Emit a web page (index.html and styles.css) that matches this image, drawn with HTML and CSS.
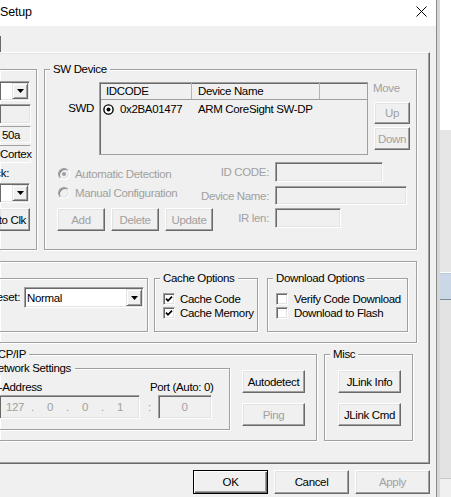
FILE: index.html
```html
<!DOCTYPE html>
<html lang="en">
<head>
<meta charset="utf-8">
<title>Setup</title>
<link rel="stylesheet" href="styles.css">
</head>
<body>
<div class="screen">
  <div class="dialog">
    <div class="titlebar">
      <span class="title">Setup</span>
      <svg class="close" width="11" height="11" viewBox="0 0 11 11"><path d="M0.5 0.5L10.5 10.5M10.5 0.5L0.5 10.5" stroke="#000" stroke-width="1" fill="none"/></svg>
    </div>
    <div class="client">
      <div class="tabstrip"><div class="tab"></div></div>
      <div class="page">
        <div class="row1">
          <div class="group cut adapter">
            <div class="combo cut w30 c1"><span class="combo-field"></span><span class="combo-btn"><svg width="7" height="4" viewBox="0 0 7 4"><polygon points="0,0 7,0 3.5,4" fill="#000"/></svg></span></div>
            <div class="field dis cut f1"></div>
            <div class="field stat cut f2"><span>50a</span></div>
            <div class="field stat cut f3"><span>Cortex</span></div>
            <div class="rlabel lbl-clk"><span>Max Clock:</span></div>
            <div class="combo cut w30 c2"><span class="combo-field"></span><span class="combo-btn"><svg width="7" height="4" viewBox="0 0 7 4"><polygon points="0,0 7,0 3.5,4" fill="#000"/></svg></span></div>
            <button class="btn cut autoclk"><span>Auto Clk</span></button>
          </div>
          <div class="group swdev">
            <div class="legend">SW Device</div>
            <div class="sw-top">
              <div class="swd-label">SWD</div>
              <div class="list">
                <div class="list-head">
                  <div class="col c-id">IDCODE</div>
                  <div class="col c-name">Device Name</div>
                  <div class="col c-rest"></div>
                </div>
                <div class="list-row">
                  <div class="cell-id">
                    <svg class="sel" width="11" height="11" viewBox="0 0 11 11"><circle cx="5.5" cy="5.5" r="4.6" fill="#fff" stroke="#000" stroke-width="1.4"/><circle cx="5.5" cy="5.5" r="2" fill="#000"/></svg>
                    <span>0x2BA01477</span>
                  </div>
                  <div class="cell-name">ARM CoreSight SW-DP</div>
                </div>
              </div>
              <div class="move-col">
                <div class="move-lbl dim">Move</div>
                <button class="btn dim up">Up</button>
                <button class="btn dim down">Down</button>
              </div>
            </div>
            <div class="sw-bottom">
              <div class="opts">
                <div class="radio-row dim r1"><span class="radio on"></span><span class="rtext">Automatic Detection</span></div>
                <div class="radio-row dim r2"><span class="radio"></span><span class="rtext">Manual Configuration</span></div>
                <div class="btn-row">
                  <button class="btn dim b48">Add</button>
                  <button class="btn dim b48">Delete</button>
                  <button class="btn dim b48">Update</button>
                </div>
              </div>
              <div class="form">
                <div class="frow fr1"><span class="flabel dim">ID CODE:</span><span class="field dis in-id"></span></div>
                <div class="frow fr2"><span class="flabel dim">Device Name:</span><span class="field dis in-name"></span></div>
                <div class="frow fr3"><span class="flabel dim">IR len:</span><span class="field dis in-ir"></span></div>
              </div>
            </div>
          </div>
        </div>

        <div class="group cut conn">
          <div class="group cut resetbox">
            <div class="reset-row">
              <div class="rlabel lbl-reset"><span>Reset:</span></div>
              <div class="combo c-reset"><span class="combo-field"><span class="combo-val">Normal</span></span><span class="combo-btn"><svg width="7" height="4" viewBox="0 0 7 4"><polygon points="0,0 7,0 3.5,4" fill="#000"/></svg></span></div>
            </div>
          </div>
          <div class="group cache">
            <div class="legend">Cache Options</div>
            <div class="checks">
              <div class="cb-row"><span class="cb on"><svg width="8" height="8" viewBox="0 0 8 8"><path d="M1 3.6L3 5.8L7 1.6" stroke="#000" stroke-width="1.7" fill="none"/></svg></span><span class="cbt">Cache Code</span></div>
              <div class="cb-row"><span class="cb on"><svg width="8" height="8" viewBox="0 0 8 8"><path d="M1 3.6L3 5.8L7 1.6" stroke="#000" stroke-width="1.7" fill="none"/></svg></span><span class="cbt">Cache Memory</span></div>
            </div>
          </div>
          <div class="group dl">
            <div class="legend">Download Options</div>
            <div class="checks">
              <div class="cb-row"><span class="cb"></span><span class="cbt">Verify Code Download</span></div>
              <div class="cb-row"><span class="cb"></span><span class="cbt">Download to Flash</span></div>
            </div>
          </div>
        </div>

        <div class="row3">
          <div class="group cut tcp">
            <div class="legend-cut lc-tcp"><span>TCP/IP</span></div>
            <div class="tcp-body">
              <div class="group cut nw">
                <div class="legend-cut lc-nw"><span>Network Settings</span></div>
                <div class="nw-labels">
                  <div class="rlabel lbl-ip"><span>IP-Address</span></div>
                  <span class="port-lbl">Port (Auto: 0)</span>
                </div>
                <div class="nw-inputs">
                  <div class="field dis cut ip">
                    <span class="oct">127</span><span class="dot">.</span><span class="oct">0</span><span class="dot">.</span><span class="oct">0</span><span class="dot">.</span><span class="oct">1</span>
                  </div>
                  <span class="colon dim">:</span>
                  <div class="field dis port"><span>0</span></div>
                </div>
              </div>
              <div class="btn-col tcp-btns">
                <button class="btn b63">Autodetect</button>
                <button class="btn dim b63 second">Ping</button>
              </div>
            </div>
          </div>
          <div class="group misc">
            <div class="legend">Misc</div>
            <div class="btn-col misc-btns">
              <button class="btn b63">JLink Info</button>
              <button class="btn b63 second">JLink Cmd</button>
            </div>
          </div>
        </div>
      </div>
      <div class="footer">
        <button class="btn def fb">OK</button>
        <button class="btn fb">Cancel</button>
        <button class="btn dim fb">Apply</button>
      </div>
    </div>
  </div>
  <div class="behind">
    <div class="bh-top"></div>
    <div class="bh-mid"></div>
    <div class="bh-band"></div>
    <div class="bh-low"></div>
  </div>
</div>
</body>
</html>
```

FILE: styles.css
```css
* { box-sizing: border-box; }
html, body { margin: 0; padding: 0; }
body {
  width: 451px; height: 497px; overflow: hidden;
  background: #f0f0f0;
  font-family: "Liberation Sans", Arial, sans-serif;
  font-size: 11.5px; line-height: 14px; letter-spacing: -0.35px; color: #000;
}
button {
  font: inherit; color: inherit; letter-spacing: inherit; margin: 0; padding: 0;
  background: #f0f0f0; display: flex; align-items: center; justify-content: center;
  white-space: nowrap;
}
.screen { display: flex; height: 497px; }
.dialog {
  width: 437px; flex: none; height: 497px;
  border-right: 1px solid #8a8a8a;
  background: #f0f0f0;
  display: flex; flex-direction: column;
}
.titlebar {
  height: 26px; flex: none; background: #fff;
  display: flex; align-items: flex-start; justify-content: space-between;
}
.title { margin-top: 5px; font-size: 12.5px; letter-spacing: -0.2px; }
.close { margin: 6px 9px 0 0; }
.client { flex: 1; display: flex; flex-direction: column; }
.tabstrip { height: 26px; flex: none; }
.tab { width: 1px; height: 16px; margin-top: 10px; border-right: 1px solid #696969; }
.page {
  width: 430px; height: 412px; flex: none;
  border-top: 1px solid #fff; border-right: 1px solid #696969; border-bottom: 1px solid #696969;
  box-shadow: inset -1px -1px 0 #a0a0a0, inset 0 1px 0 #e3e3e3;
  display: flex; flex-direction: column;
}
.dim { color: #a0a0a0; }

/* group boxes */
.group {
  position: relative; flex: none;
  border: 1px solid #a0a0a0;
  box-shadow: inset 1px 1px 0 #fff, 1px 1px 0 #fff;
}
.group.cut { border-left: none; }
.legend {
  position: absolute; top: -8px; left: 5px; padding: 0 3px;
  background: #f0f0f0; white-space: nowrap;
}
.legend-cut {
  position: absolute; top: -8px; left: 0;
  display: flex; justify-content: flex-end;
  background: #f0f0f0; white-space: nowrap;
}
.lc-tcp { width: 29px; padding-right: 3px; }
.lc-nw { width: 75px; padding-right: 4px; }
.rlabel { display: flex; justify-content: flex-end; white-space: nowrap; flex: none; }

/* sunken fields */
.field {
  display: flex; align-items: center; flex: none;
  border: 1px solid; border-color: #a0a0a0 #fff #fff #a0a0a0;
  box-shadow: inset 1px 1px 0 #696969, inset -1px -1px 0 #e3e3e3;
  background: #fff; white-space: nowrap;
}
.field.cut { border-left: none; }
.field.dis { background: #f0f0f0; }
.field.stat { background: #f0f0f0; box-shadow: none; }

/* combo */
.combo {
  display: flex; flex: none; padding: 1px;
  border: 1px solid; border-color: #a0a0a0 #fff #fff #a0a0a0;
  box-shadow: inset 1px 1px 0 #696969, inset -1px -1px 0 #e3e3e3;
  background: #fff;
}
.combo.cut { border-left: none; padding-left: 0; }
.combo-field { flex: 1; display: flex; align-items: center; }
.combo-btn {
  width: 16px; flex: none; display: flex; align-items: center; justify-content: center;
  background: #f0f0f0;
  border: 1px solid; border-color: #e3e3e3 #696969 #696969 #e3e3e3;
  box-shadow: inset 1px 1px 0 #fff, inset -1px -1px 0 #a0a0a0;
}

/* buttons */
.btn {
  flex: none;
  border: 1px solid; border-color: #fff #696969 #696969 #fff;
  box-shadow: inset -1px -1px 0 #a0a0a0, inset 1px 1px 0 #e3e3e3;
}
.btn.def {
  border-color: #000;
  box-shadow: inset 1px 1px 0 #fff, inset -1px -1px 0 #696969, inset -2px -2px 0 #a0a0a0;
}
.btn.cut { border-left: none; }

/* row 1 */
.row1 { display: flex; margin-top: 16px; height: 181px; flex: none; }
.adapter { width: 37px; height: 181px; display: flex; flex-direction: column; align-items: flex-start; }
.w30 { width: 30px; height: 20px; }
.c1 { margin-top: 11px; }
.f1 { width: 31px; height: 20px; margin-top: 3px; }
.f2 { width: 31px; height: 17px; margin-top: 2px; padding-left: 2px; }
.f3 { width: 31px; height: 18px; margin-top: 2px; }
.lbl-clk { width: 9px; height: 14px; margin-top: 3px; }
.c2 { margin-top: 3px; }
.autoclk { width: 30px; height: 23px; margin-top: 5px; justify-content: flex-end; padding-right: 3px; }

.swdev { width: 373px; height: 181px; margin-left: 7px; }
.sw-top { display: flex; margin-top: 12px; }
.swd-label { width: 49px; text-align: right; margin-top: 19px; flex: none; }
.list {
  width: 269px; height: 73px; margin-left: 5px; flex: none;
  border: 1px solid #a0a0a0;
  box-shadow: inset 1px 1px 0 #696969;
}
.list-head { display: flex; height: 17px; border-bottom: 1px solid #a0a0a0; margin-left: 1px; }
.col { height: 16px; line-height: 16px; padding-left: 6px; border-right: 1px solid #b4b4b4; flex: none; }
.c-id { width: 91px; padding-left: 5px; }
.c-name { width: 128px; }
.c-rest { width: 47px; border-right: none; }
.list-row { display: flex; margin-top: 2px; height: 14px; }
.cell-id { width: 98px; display: flex; align-items: center; flex: none; }
.sel { margin-left: 3px; margin-right: 6px; }
.cell-name { flex: none; }
.move-col { display: flex; flex-direction: column; align-items: flex-start; margin-left: 5px; width: 37px; flex: none; }
.move-lbl { height: 14px; margin-top: -1px; }
.up { width: 36px; height: 22px; margin-left: 1px; margin-top: 7px; }
.down { width: 36px; height: 23px; margin-left: 1px; margin-top: 3px; }

.sw-bottom { display: flex; margin-top: 7px; }
.opts { width: 113px; margin-left: 12px; display: flex; flex-direction: column; flex: none; }
.radio-row { display: flex; align-items: center; height: 14px; white-space: nowrap; }
.r1 { margin-top: 5px; }
.r2 { margin-top: 5px; }
.radio {
  width: 12px; height: 12px; margin-left: 1px; flex: none; position: relative;
  border-radius: 50%;
  border: 1px solid; border-color: #a0a0a0 #fff #fff #a0a0a0;
  box-shadow: inset 1px 1px 0 #808080, inset -1px -1px 0 #e3e3e3;
  background: #f0f0f0;
}
.radio.on::after {
  content: ""; position: absolute; left: 3px; top: 3px; width: 4px; height: 4px;
  border-radius: 50%; background: #a0a0a0;
}
.rtext { margin-left: 5px; }
.btn-row { display: flex; gap: 6px; margin-top: 8px; }
.b48 { width: 48px; height: 23px; }
.form { display: flex; flex-direction: column; flex: none; }
.frow { display: flex; align-items: center; }
.fr1 { height: 20px; }
.fr2 { height: 19px; margin-top: 4px; }
.fr3 { height: 20px; margin-top: 3px; }
.flabel { width: 99px; text-align: right; margin-right: 6px; white-space: nowrap; }
.in-id { width: 108px; height: 20px; }
.in-name { width: 132px; height: 19px; }
.in-ir { width: 66px; height: 20px; }

/* row 2 */
.conn { width: 417px; height: 82px; margin-top: 11px; display: flex; align-items: flex-start; padding-top: 16px; }
.resetbox { width: 148px; height: 54px; }
.reset-row { display: flex; margin-top: 8px; }
.lbl-reset { width: 20px; line-height: 21px; }
.c-reset { width: 120px; height: 21px; margin-left: 4px; }
.combo-val { padding-left: 1px; }
.cache { width: 104px; height: 54px; margin-left: 6px; }
.dl { width: 141px; height: 54px; margin-left: 9px; }
.checks { padding-top: 13px; padding-left: 8px; }
.cb-row { display: flex; align-items: center; height: 14px; white-space: nowrap; }
.cb {
  width: 12px; height: 12px; flex: none; display: flex; align-items: center; justify-content: center;
  border: 1px solid; border-color: #a0a0a0 #fff #fff #a0a0a0;
  box-shadow: inset 1px 1px 0 #696969, inset -1px -1px 0 #e3e3e3;
  background: #fff;
}
.cache .cbt { margin-left: 5px; }
.dl .cbt { margin-left: 6px; }

/* row 3 */
.row3 { display: flex; margin-top: 11px; height: 87px; flex: none; }
.tcp { width: 317px; height: 87px; }
.tcp-body { display: flex; align-items: flex-start; padding-top: 13px; }
.nw { width: 230px; height: 62px; }
.nw-labels { display: flex; margin-top: 11px; height: 14px; }
.lbl-ip { width: 42px; }
.port-lbl { margin-left: 108px; white-space: nowrap; }
.nw-inputs { display: flex; align-items: center; margin-top: 1px; }
.ip { width: 140px; height: 24px; color: #a0a0a0; }
.oct { width: 30px; text-align: center; flex: none; }
.dot { width: 5px; text-align: center; flex: none; }
.colon { width: 18px; padding-left: 8px; flex: none; }
.port { width: 54px; height: 24px; justify-content: center; color: #a0a0a0; padding-right: 1px; }
.btn-col { display: flex; flex-direction: column; flex: none; }
.tcp-btns { margin-left: 12px; margin-top: 2px; }
.b63 { width: 63px; height: 23px; }
.second { margin-top: 10px; }
.misc { width: 89px; height: 87px; margin-left: 7px; }
.misc-btns { margin-left: 13px; margin-top: 15px; }

/* footer */
.footer { display: flex; justify-content: flex-end; gap: 6px; padding: 6px 6px 0 0; }
.fb { width: 75px; height: 24px; }

/* window behind */
.behind { flex: 1; display: flex; flex-direction: column; border-left: 3px solid #d6d6d6; }
.bh-top { height: 130px; background: #fff; }
.bh-mid { height: 143px; background: #e6e6e6; border-bottom: 1px solid #fff; }
.bh-band { height: 27px; background: #c9d7e6; border-top: 1px solid #b9cadb; border-bottom: 1px solid #7d8a98; }
.bh-low { height: 179px; background: #e3e3e3; border-bottom: 1px solid #c8c8c8; }
```
